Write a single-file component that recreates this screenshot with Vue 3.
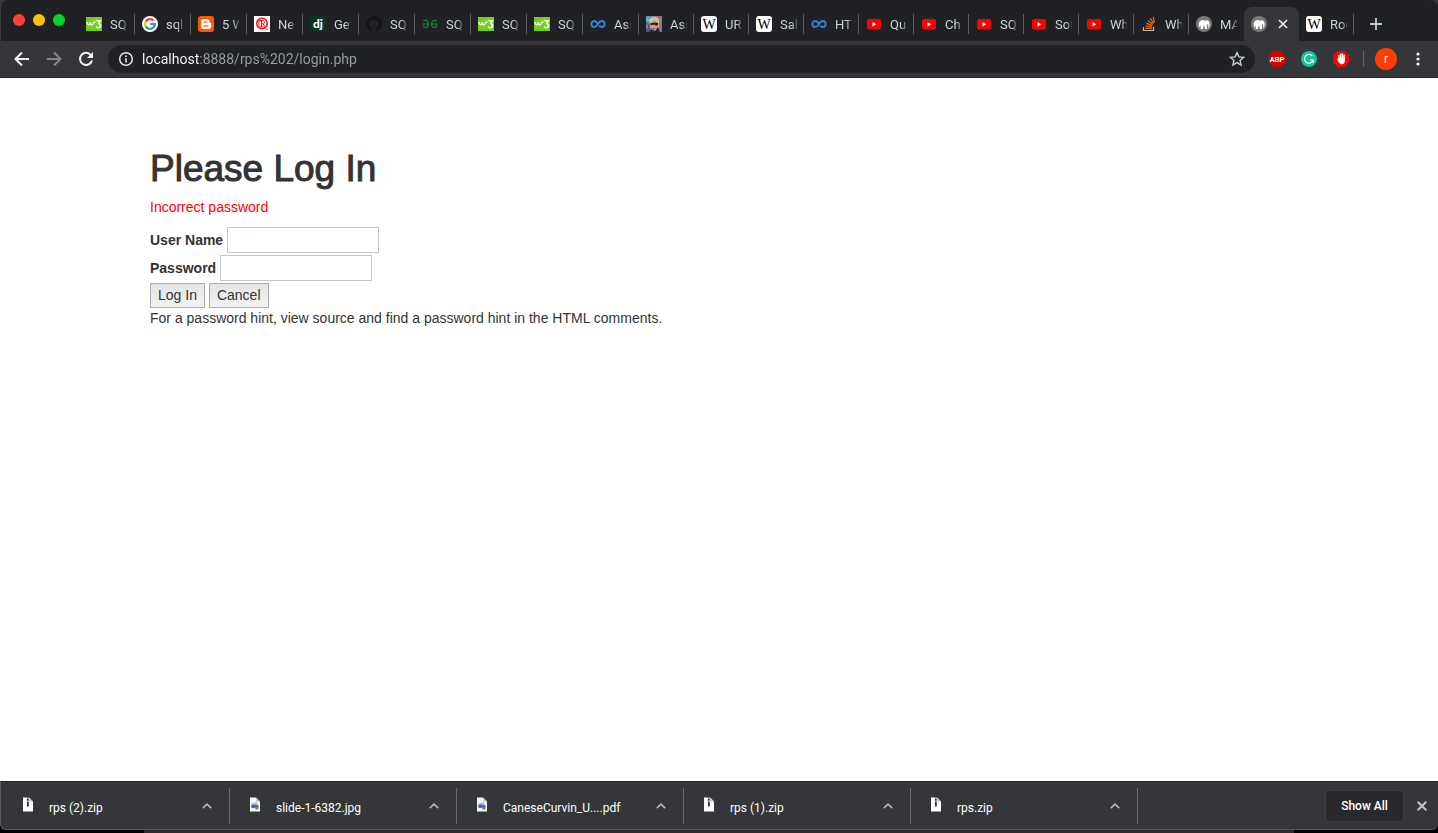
<script setup>
import { ref } from 'vue'

const tabs = [
  { icon: 'w3', title: 'SQ' },
  { icon: 'google', title: 'sql' },
  { icon: 'blogger', title: '5 W' },
  { icon: 'quora', title: 'Ne' },
  { icon: 'django', title: 'Get' },
  { icon: 'github', title: 'SQ' },
  { icon: 'geeks', title: 'SQ' },
  { icon: 'w3', title: 'SQ' },
  { icon: 'w3', title: 'SQ' },
  { icon: 'coursera', title: 'Ass' },
  { icon: 'face', title: 'Ass' },
  { icon: 'wiki', title: 'UR' },
  { icon: 'wiki', title: 'Sal' },
  { icon: 'coursera', title: 'HT' },
  { icon: 'youtube', title: 'Qu' },
  { icon: 'youtube', title: 'Ch' },
  { icon: 'youtube', title: 'SQ' },
  { icon: 'youtube', title: 'Sof' },
  { icon: 'youtube', title: 'Wh' },
  { icon: 'stack', title: 'Wh' },
  { icon: 'mamp', title: 'MA' },
  { icon: 'mamp', title: '', active: true },
  { icon: 'wiki', title: 'Roc' }
]

const downloads = [
  { icon: 'zip', name: 'rps (2).zip' },
  { icon: 'image', name: 'slide-1-6382.jpg' },
  { icon: 'image', name: 'CaneseCurvin_U....pdf' },
  { icon: 'zip', name: 'rps (1).zip' },
  { icon: 'zip', name: 'rps.zip' }
]

const address = ref('localhost:8888/rps%202/login.php')
const user = ref('')
const password = ref('')
</script>

<template>
  <div class="window">
    <svg class="sprite" aria-hidden="true">
      <symbol id="w3" viewBox="0 0 16 16">
        <rect y="1" width="16" height="14" fill="#6fcf1c" />
        <path d="M.9 6c0 3.200 2.400 3.600 3.300.6 0 3 2.700 3 3.400.3.300-1 1-1.200 1.900-.7M10.400 4.800h4l-2 2.600c2.800.1 2.700 4.300.1 4.400-1.200 0-2-.5-2.400-1.300" fill="none" stroke="#fff" stroke-width="1.500" stroke-linejoin="round" />
      </symbol>
      <symbol id="google" viewBox="0 0 16 16">
        <circle cx="8" cy="8" r="8" fill="#fff" />
        <g fill="none" stroke-width="2.200">
          <path d="M11.400 4.400A4.900 4.900 0 0 0 3.700 5.700" stroke="#ea4335" />
          <path d="M3.700 5.700a4.900 4.900 0 0 0 0 4.600" stroke="#fbbc05" />
          <path d="M3.700 10.300a4.900 4.900 0 0 0 7.500 1.400" stroke="#34a853" />
          <path d="M11.200 11.700A4.900 4.900 0 0 0 12.900 8H8.200" stroke="#4285f4" />
        </g>
      </symbol>
      <symbol id="blogger" viewBox="0 0 16 16">
        <rect width="16" height="16" rx="3" fill="#ff5a00" />
        <path d="M6 3h2.700C10.500 3 11.600 4.200 11.600 6c0 .8.3 1 .9 1s.7.300.7.900v2c0 1.900-1.200 3.100-3.100 3.100H6c-1.900 0-3.100-1.200-3.100-3.100V6.100C2.900 4.200 4.100 3 6 3z" fill="#fff" />
        <path d="M6 6.100h2.500M6 9.900h4" stroke="#ff5a00" stroke-width="1.400" stroke-linecap="round" />
      </symbol>
      <symbol id="quora" viewBox="0 0 16 16">
        <rect width="16" height="16" fill="#fff" />
        <g fill="none" stroke="#f0101c">
          <circle cx="8" cy="7.500" r="5.300" stroke-width="1.500" />
          <path d="M3 4.500h6c2.200 0 2.200 3.300 0 3.300H7.500M7.500 4.500v6.300M5.500 10.800h4M9.200 8l2.800 4.700c.7 1 1.700.8 2.400.2M5 5v5.500" stroke-width="1" />
        </g>
      </symbol>
      <symbol id="django" viewBox="0 0 16 16">
        <rect width="16" height="16" fill="#0c3326" />
        <text x="8" y="11.500" text-anchor="middle" font-family="Lato, sans-serif" font-size="12" font-weight="900" fill="#fff">dj</text>
      </symbol>
      <symbol id="github" viewBox="0 0 16 16">
        <path d="M8 0a8 8 0 0 0-2.530 15.590c.4.070.550-.170.550-.380v-1.490c-2.230.480-2.690-.940-2.690-.940-.360-.930-.890-1.170-.890-1.170-.730-.500.050-.490.050-.490.800.060 1.230.830 1.230.830.720 1.220 1.870.870 2.330.660.070-.520.280-.870.510-1.070-1.780-.200-3.640-.890-3.640-3.950 0-.870.310-1.590.820-2.150-.080-.200-.360-1.020.080-2.120 0 0 .670-.210 2.200.820A7.600 7.600 0 0 1 8 3.870c.680 0 1.360.090 2 .27 1.530-1.040 2.200-.820 2.200-.820.440 1.100.160 1.920.080 2.120.510.560.820 1.270.820 2.150 0 3.070-1.870 3.750-3.650 3.950.290.250.540.730.540 1.480v2.190c0 .210.150.460.550.380A8 8 0 0 0 8 0z" fill="#131416" />
      </symbol>
      <symbol id="geeks" viewBox="0 0 16 16">
        <path d="M1.300 5.200C3 3.400 6.500 4 6.500 8c0 4.200-4.500 4.600-5.300 1.500M.3 8h6.200M14.700 5.200C13 3.400 9.500 4 9.500 8c0 4.200 4.500 4.600 5.300 1.500V8H9.500" fill="none" stroke="#08913f" stroke-width="1.100" />
      </symbol>
      <symbol id="coursera" viewBox="0 0 16 16">
        <path d="M8 8C6.700 5.800 5.900 5 4.300 5a3 3 0 0 0 0 6C5.900 11 6.700 10.200 8 8s2.100-3 3.700-3a3 3 0 0 1 0 6C10.300 11 9.500 10.200 9 9.500" fill="none" stroke="#2f86d8" stroke-width="1.900" />
      </symbol>
      <symbol id="face" viewBox="0 0 16 16">
        <rect width="16" height="16" fill="#7584a8" />
        <path d="M10 0h6v12l-3-4z" fill="#a06b76" />
        <path d="M0 6l4 3v7H0z" fill="#455d8c" />
        <path d="M0 2l3-2v5L0 6zM13 3l2 1-1 2z" fill="#54b5d0" />
        <path d="M0 8l2 1v4l-2-1zM13 11l3-1v4z" fill="#b06a80" />
        <path d="M4 6h9v5l-3 4H7l-3-4z" fill="#d99f85" />
        <path d="M3 5c0-5 9-6 10-1v3L9 5 4 7z" fill="#c9c3a2" />
        <path d="M4 7.500l4-1 4 .5v2l-2 .7-2-1.200-3 .8z" fill="#1d2026" />
        <path d="M6 12l3 .5-1 1zM3 16l2-3 4 2 3-4 2 5z" fill="#292935" />
      </symbol>
      <symbol id="wiki" viewBox="0 0 16 16">
        <rect width="16" height="16" rx="3" fill="#fff" />
        <text x="8" y="12.500" text-anchor="middle" font-family="Liberation Serif, serif" font-size="14" fill="#000">W</text>
      </symbol>
      <symbol id="youtube" viewBox="0 0 16 16">
        <rect x="1" y="3" width="14" height="10.500" rx="2" fill="#f00" />
        <path d="M6.500 6v4.400L10.200 8.200z" fill="#fff" />
      </symbol>
      <symbol id="stack" viewBox="0 0 16 16">
        <path d="M2.500 11V14.500h10V11" fill="none" stroke="#bcbbbb" stroke-width="1.200" />
        <path d="M4.300 12.400h6.500M4.500 10l6.300.9M5.200 7.400l5.900 2M6.800 4.800l5 3.500M9.300 2.300l3.400 5M12.200.8l1.200 5.700" fill="none" stroke="#f26c0c" stroke-width="1.200" />
      </symbol>
      <symbol id="mamp" viewBox="0 0 16 16">
        <circle cx="8" cy="8" r="8" fill="#7b7b7b" />
        <path d="M3.400 11.500C1.700 7.800 3.400 4 6.700 4c1 0 1.500.3 2 .9 2.500-1.500 5 .1 5 3.100 0 1.600-.4 2.800-1 3.700l-.9-.4c.7-1.100.7-2.600.1-3.300-.9.4-1.100 1.700-1.100 5H8.900c-.2-1.600-.2-2.700-.9-3.500-.8.8-.9 1.900-1 3.500H4.700c0-1.800 0-2.500-.3-3.500-.5.500-.6 1.200-.5 1.800z" fill="#fff" />
      </symbol>
      <symbol id="zip" viewBox="0 0 12 15">
        <path d="M1 .5h6L11 4.500v10H1z" fill="#fff" />
        <path d="M7 .5V4.500h4z" fill="#c4c4c4" />
        <path d="M5.800 .5v4.500" stroke="#333" stroke-width="1.800" stroke-dasharray="1 .4" />
        <path d="M5 5h1.800v4.500H5z" fill="#333" />
      </symbol>
      <symbol id="image" viewBox="0 0 12 15">
        <path d="M1 .5h6L11 4.500v10H1z" fill="#f7f7f7" />
        <path d="M7 .5V4.500h4z" fill="#c4c4c4" />
        <path d="M2 6.500L8 5l1.500 4.500-7 1.500z" fill="#a9c4ee" />
        <path d="M2 8.500L5 7.500l4.500 1v2L3 11z" fill="#3c63ad" />
        <circle cx="7.800" cy="11" r="1.800" fill="#88786e" />
      </symbol>
    </svg>

    <header>
      <div class="tab-strip">
        <div class="lights">
          <button class="light close" aria-label="Close window"></button>
          <button class="light minimise" aria-label="Minimise window"></button>
          <button class="light expand" aria-label="Expand window"></button>
        </div>
        <nav class="tabs" aria-label="Tabs">
          <div v-for="(tab, i) in tabs" :key="i" class="tab" :class="{ wide: i < 10, active: tab.active, flush: i === 20 }">
            <button class="tab-face" :aria-label="tab.title || 'Current tab'">
              <svg class="favicon"><use :href="'#' + tab.icon" /></svg>
              <span v-if="!tab.active" class="tab-title">{{ tab.title }}</span>
            </button>
            <button v-if="tab.active" class="tab-close" aria-label="Close tab">
              <svg width="10" height="10" viewBox="0 0 10 10"><path d="M1 1l8 8M9 1L1 9" stroke="#e8eaed" stroke-width="1.700" /></svg>
            </button>
          </div>
        </nav>
        <button class="new-tab" aria-label="New tab">
          <svg width="14" height="14" viewBox="0 0 14 14"><path d="M7 1v12M1 7h12" stroke="#c4c7cb" stroke-width="1.800" /></svg>
        </button>
      </div>

      <div class="toolbar">
        <div class="nav-buttons">
          <button aria-label="Back">
            <svg width="16" height="16" viewBox="0 0 16 16"><path d="M15 8H2M8 1.500L1.500 8 8 14.500" fill="none" stroke="#f1f3f4" stroke-width="2" /></svg>
          </button>
          <button aria-label="Forward">
            <svg width="16" height="16" viewBox="0 0 16 16"><path d="M1 8h13M8 1.500L14.500 8 8 14.500" fill="none" stroke="#85878a" stroke-width="2" /></svg>
          </button>
          <button aria-label="Reload">
            <svg width="16" height="16" viewBox="0 0 16 16">
              <path d="M13.200 4.500A6.100 6.100 0 1 0 14 9.500" fill="none" stroke="#f1f3f4" stroke-width="2" />
              <path d="M15 1v6H9z" fill="#f1f3f4" />
            </svg>
          </button>
        </div>
        <div class="omnibox">
          <button aria-label="Site information">
            <svg width="16" height="16" viewBox="0 0 16 16">
              <circle cx="8" cy="8" r="6.300" fill="none" stroke="#e8eaed" stroke-width="1.500" />
              <path d="M8 7.200v4.300M8 4.400v1.700" stroke="#e8eaed" stroke-width="1.600" />
            </svg>
          </button>
          <input v-model="address" class="address" type="text" aria-label="Address" spellcheck="false" />
          <button aria-label="Bookmark this page">
            <svg width="16" height="16" viewBox="0 0 16 16"><path d="M8 1.600l1.900 4.300 4.700.4-3.500 3.100 1 4.600L8 11.600 3.900 14l1-4.600L1.400 6.300l4.700-.4z" fill="none" stroke="#c8cbce" stroke-width="1.400" /></svg>
          </button>
        </div>
        <div class="extensions">
          <button aria-label="Adblock Plus">
            <svg width="16" height="16" viewBox="0 0 16 16">
              <path d="M4.700 0h6.600L16 4.700v6.600L11.300 16H4.700L0 11.300V4.700z" fill="#d80000" />
              <text x="8" y="10.800" text-anchor="middle" font-family="Roboto, sans-serif" font-size="7.500" font-weight="700" fill="#fff">ABP</text>
            </svg>
          </button>
          <button aria-label="Grammarly">
            <svg width="16" height="16" viewBox="0 0 16 16">
              <circle cx="8" cy="8" r="8" fill="#11c499" />
              <path d="M11.500 5.200A4.400 4.400 0 1 0 12.200 9H9M12.300 9v3" fill="none" stroke="#fff" stroke-width="1.200" />
            </svg>
          </button>
          <button aria-label="AdBlock">
            <svg width="16" height="16" viewBox="0 0 16 16">
              <path d="M4.700 0h6.600L16 4.700v6.600L11.300 16H4.700L0 11.300V4.700z" fill="#f00" />
              <path d="M6 8V4.500M7.700 7.500V3M9.400 7.500V3M11.100 8V4.300" stroke="#fff" stroke-width="1.400" stroke-linecap="round" />
              <path d="M5.300 7h6.500v3c0 2-1 3.200-2.800 3.200-1.600 0-2.300-.7-3-1.800L4.200 8.500z" fill="#fff" />
            </svg>
          </button>
        </div>
        <span class="divider"></span>
        <button class="avatar" aria-label="Profile">r</button>
        <button class="menu" aria-label="Menu">
          <svg width="4" height="14" viewBox="0 0 4 14" fill="#f1f3f4"><circle cx="2" cy="2" r="1.600" /><circle cx="2" cy="7" r="1.600" /><circle cx="2" cy="12" r="1.600" /></svg>
        </button>
      </div>
    </header>

    <main>
      <div class="container">
        <h1>Please Log In</h1>
        <p class="error">Incorrect password</p>
        <form @submit.prevent>
          <div class="field">
            <label for="user">User Name</label>
            <input id="user" v-model="user" type="text" />
          </div>
          <div class="field">
            <label for="password">Password</label>
            <input id="password" v-model="password" type="password" />
          </div>
          <div class="field">
            <button type="submit">Log In</button>
            <button type="button">Cancel</button>
          </div>
        </form>
        <p>For a password hint, view source and find a password hint in the HTML comments.</p>
      </div>
    </main>

    <footer>
      <div class="shelf">
        <div v-for="d in downloads" :key="d.name" class="download">
          <button class="file">
            <svg width="12" height="15"><use :href="'#' + d.icon" /></svg>
            <span>{{ d.name }}</span>
          </button>
          <button :aria-label="'Options for ' + d.name">
            <svg width="10" height="6" viewBox="0 0 10 6"><path d="M.8 5.200L5 1.200l4.200 4" fill="none" stroke="#b4b6b9" stroke-width="1.600" /></svg>
          </button>
        </div>
        <button class="show-all">Show All</button>
        <button class="close-shelf" aria-label="Close downloads">
          <svg width="10" height="10" viewBox="0 0 10 10"><path d="M.7.7l8.600 8.600M9.300.7L.7 9.300" stroke="#c4c6c8" stroke-width="2" /></svg>
        </button>
      </div>
    </footer>
  </div>
</template>

<style>
body {
  background: #000;
}
</style>

<style scoped>
* {
  box-sizing: border-box;
}
.window {
  display: flex;
  flex-direction: column;
  min-height: 100vh;
  font-family: Roboto, "Liberation Sans", sans-serif;
  overflow: hidden;
}
.sprite {
  position: absolute;
  width: 0;
  height: 0;
}
svg {
  display: block;
  flex: none;
}
button {
  display: block;
  padding: 0;
  border: 0;
  background: none;
  color: inherit;
  font: inherit;
}
header {
  background: #35363a;
  border-bottom: 1px solid #252629;
}
.tab-strip {
  display: flex;
  height: 41px;
  padding-top: 7px;
  background: #202124;
  border-left: 1px solid #3a3b3e;
  border-radius: 8px 8px 0 0;
}
.lights {
  display: flex;
  gap: 8px;
  width: 78px;
  padding: 7px 0 0 12px;
}
.light {
  width: 12px;
  height: 12px;
  border-radius: 50%;
}
.close {
  background: #ff4238;
}
.minimise {
  background: #ffc105;
}
.expand {
  background: #05d52b;
}
.tabs {
  display: flex;
}
.tab {
  display: flex;
  align-items: center;
  position: relative;
  width: 55px;
  padding-left: 7px;
  color: #cfd2d6;
  font-size: 13px;
}
.tab.wide {
  width: 56px;
}
.tab::after {
  content: "";
  position: absolute;
  top: 7px;
  right: 0;
  width: 1px;
  height: 20px;
  background: #5c5e61;
}
.tab.flush::after,
.tab.active::after {
  display: none;
}
.tab.active {
  justify-content: space-between;
  padding: 0 11px 0 7px;
  background: #35363a;
  border-radius: 8px 8px 0 0;
}
.tab-face {
  display: flex;
  align-items: center;
  gap: 8px;
}
.favicon {
  width: 16px;
  height: 16px;
}
.tab-title {
  width: 17px;
  white-space: nowrap;
  text-align: left;
  mask-image: linear-gradient(90deg, #000 11px, transparent 19px);
}
.new-tab {
  padding: 0 15px;
}
.toolbar {
  display: flex;
  align-items: center;
  height: 36px;
  padding: 0 18px 0 14px;
}
.nav-buttons {
  display: flex;
  gap: 16px;
}
.omnibox {
  display: flex;
  flex: 1;
  align-items: center;
  height: 28px;
  margin: 0 14px;
  padding: 0 10px;
  background: #202124;
  border-radius: 14px;
}
.address {
  flex: 1;
  min-width: 0;
  height: 24px;
  margin: 0 8px;
  padding: 0;
  border: 0;
  outline: 0;
  background: linear-gradient(90deg, #fff 57px, #9aa0a6 57px);
  background-clip: text;
  color: transparent;
  caret-color: #fff;
  font: 14px Roboto, sans-serif;
}
.extensions {
  display: flex;
  gap: 16px;
}
.divider {
  width: 1px;
  height: 16px;
  margin: 0 11px 0 14px;
  background: #5f6165;
}
.avatar {
  width: 22px;
  height: 22px;
  border-radius: 50%;
  background: #ff3d00;
  color: #fff;
  font-size: 12px;
}
.menu {
  margin-left: 19px;
}
main {
  flex: 1;
  background: #fff;
  color: #333;
  font: 14px/20px "Liberation Sans", sans-serif;
}
.container {
  max-width: 1168px;
  margin: 0 auto;
  padding: 71px 15px;
}
h1 {
  margin: 0 0 8px;
  font-size: 37px;
  font-weight: 400;
  line-height: 40px;
  -webkit-text-stroke: 1px #333;
}
p {
  margin: 0 0 10px;
}
.error {
  color: #f00;
}
.field {
  display: flex;
  align-items: center;
  gap: 4px;
  margin-bottom: 2px;
}
.field:last-child {
  margin-bottom: 0;
}
.field label {
  font-weight: 700;
}
.field input {
  width: 152px;
  height: 26px;
  padding: 2px;
  border: 1px solid #c8c8c8;
  background: #fff;
  font: inherit;
}
.field button {
  height: 25px;
  padding: 0 7px 2px;
  border: 1px solid #adadad;
  background: linear-gradient(#e4e4e4, #f3f3f3);
}
footer {
  height: 52px;
  background: linear-gradient(90deg, #000 10%, #30282b 10%, #30282b 90%, #000 90%);
}
.shelf {
  display: flex;
  align-items: center;
  height: 49px;
  padding: 0 11px 0 2px;
  background: #35363a;
  border-top: 1px solid #242528;
  border-bottom: 1px solid #58595c;
  border-left: 1px solid #58595c;
  border-radius: 0 0 6px 6px;
  color: #fff;
  font-size: 12px;
}
.download {
  display: flex;
  flex: 0 1 227px;
  align-items: center;
  justify-content: space-between;
  height: 36px;
  padding: 0 17px 0 19px;
  border-right: 1px solid #68696c;
}
.file {
  display: flex;
  gap: 15px;
}
.file span {
  padding-top: 4px;
}
.show-all {
  width: 79px;
  height: 32px;
  margin: 0 13px 0 auto;
  border: 1px solid #3f4044;
  border-radius: 4px;
  background: #28292c;
  font-weight: 500;
}
</style>
